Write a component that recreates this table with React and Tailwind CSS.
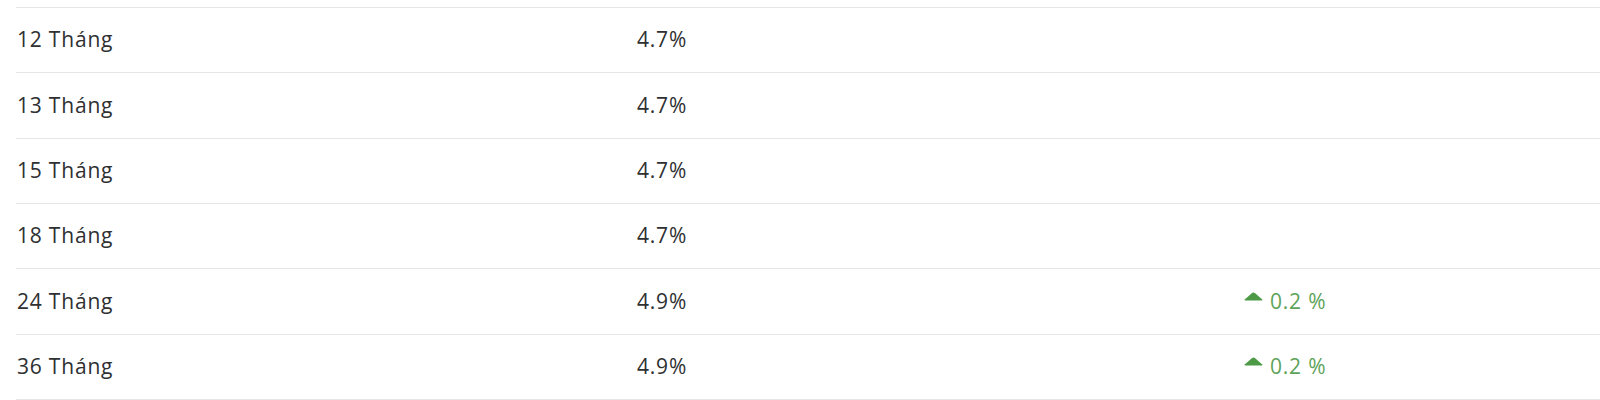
import React from "react";

const rows = [
  { term: "12 Tháng", rate: "4.7%", change: null },
  { term: "13 Tháng", rate: "4.7%", change: null },
  { term: "15 Tháng", rate: "4.7%", change: null },
  { term: "18 Tháng", rate: "4.7%", change: null },
  { term: "24 Tháng", rate: "4.9%", change: "0.2 %" },
  { term: "36 Tháng", rate: "4.9%", change: "0.2 %" },
];

export default function App() {
  return (
    <div className="w-[1600px] h-[400px] bg-white overflow-hidden pt-[7px] pl-[16px]" style={{ fontFamily: '"Open Sans", "Noto Sans", sans-serif' }}>
      <div className="border-t border-[#e6e6e6]">
        {rows.map((r) => (
          <div key={r.term} className="flex items-center h-[65.33px] border-b border-[#e6e6e6] text-[21px] text-[#2e3032] tracking-[0.8px]">
            <div className="w-[621px] pl-[1px]">{r.term}</div>
            <div className="w-[607px]">{r.rate}</div>
            <div className="flex items-center text-[#5ea35a]">
              {r.change && (
                <>
                  <svg width="19" height="9" viewBox="0 0 19 9" className="mr-[7px] mb-[10px]">
                    <path d="M9.5 0.4 Q10.2 0.4 10.9 1 L18 7.3 Q18.9 8.6 17.6 8.6 L1.4 8.6 Q0.1 8.6 1 7.3 L8.1 1 Q8.8 0.4 9.5 0.4 Z" fill="#4c9a46" />
                  </svg>
                  <span>{r.change}</span>
                </>
              )}
            </div>
          </div>
        ))}
      </div>
    </div>
  );
}
